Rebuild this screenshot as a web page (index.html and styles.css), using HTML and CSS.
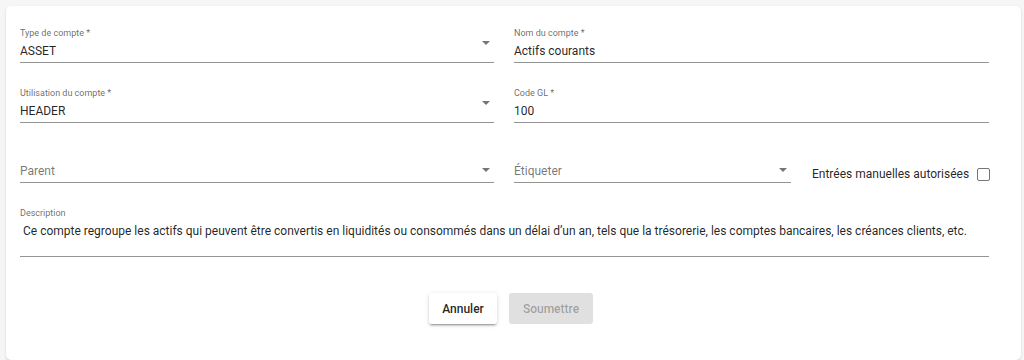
FILE: index.html
```html
<!DOCTYPE html>
<html lang="fr">
<head>
<meta charset="utf-8">
<title>Compte</title>
<link rel="stylesheet" href="styles.css">
</head>
<body>
<div class="card">
  <form class="form">
    <div class="grid">
      <div class="field">
        <div class="label">Type de compte *</div>
        <div class="input select">
          <span class="value">ASSET</span>
          <span class="arrow arrow-top"></span>
        </div>
      </div>
      <div class="field">
        <div class="label">Nom du compte *</div>
        <div class="input">
          <span class="value">Actifs courants</span>
        </div>
      </div>
      <div class="field">
        <div class="label">Utilisation du compte *</div>
        <div class="input select">
          <span class="value">HEADER</span>
          <span class="arrow arrow-top"></span>
        </div>
      </div>
      <div class="field">
        <div class="label">Code GL *</div>
        <div class="input">
          <span class="value">100</span>
        </div>
      </div>
      <div class="field">
        <div class="label"></div>
        <div class="input select">
          <span class="placeholder">Parent</span>
          <span class="arrow arrow-mid"></span>
        </div>
      </div>
      <div class="field-row">
        <div class="field grow">
          <div class="label"></div>
          <div class="input select">
            <span class="placeholder">Étiqueter</span>
            <span class="arrow arrow-mid"></span>
          </div>
        </div>
        <label class="check">
          <span class="check-text">Entrées manuelles autorisées</span>
          <span class="box"></span>
        </label>
      </div>
      <div class="field full">
        <div class="label">Description</div>
        <div class="input multiline">
          <span class="value desc">Ce compte regroupe les actifs qui peuvent être convertis en liquidités ou consommés dans un délai d’un an, tels que la trésorerie, les comptes bancaires, les créances clients, etc.</span>
        </div>
      </div>
    </div>
  </form>
  <div class="actions">
    <button type="button" class="btn btn-cancel">Annuler</button>
    <button type="button" class="btn btn-submit" disabled>Soumettre</button>
  </div>
</div>
</body>
</html>
```

FILE: styles.css
```css
* { box-sizing: border-box; }

html, body {
  margin: 0;
  background: #f6f6f6;
}

body {
  padding: 6px 3px 0 6px;
  font-family: Roboto, "Liberation Sans", sans-serif;
  color: rgba(0, 0, 0, 0.87);
  height: 360px;
  overflow: hidden;
}

.card {
  background: #ffffff;
  border-radius: 5px;
  box-shadow: 0 1px 3px rgba(0, 0, 0, 0.12), 0 1px 1px rgba(0, 0, 0, 0.06);
  height: 354px;
}

.form {
  padding: 22px 32px 0 14px;
}

.grid {
  display: grid;
  grid-template-columns: 474px 475px;
  column-gap: 20px;
  row-gap: 25px;
}

.field {
  display: flex;
  flex-direction: column;
}

.field.full {
  grid-column: 1 / 3;
}

.label {
  font-size: 9px;
  line-height: 11px;
  height: 11px;
  color: rgba(0, 0, 0, 0.6);
}

.input {
  position: relative;
  margin-top: 4px;
  padding: 1px 0 4px 0;
  border-bottom: 1px solid rgba(0, 0, 0, 0.42);
  font-size: 12px;
  line-height: 14px;
  height: 20px;
}

.input.multiline {
  height: auto;
  padding: 1px 0 18px 3px;
}

.value {
  display: block;
  color: rgba(0, 0, 0, 0.87);
  white-space: nowrap;
}

.placeholder {
  display: block;
  color: rgba(0, 0, 0, 0.55);
}

.arrow {
  position: absolute;
  right: 4px;
  width: 0;
  height: 0;
  border-left: 4px solid transparent;
  border-right: 4px solid transparent;
  border-top: 4px solid rgba(0, 0, 0, 0.54);
}

.arrow-top { top: -2px; }
.arrow-mid { top: 5px; }

.field-row {
  display: flex;
  align-items: flex-start;
}

.field.grow {
  width: 277px;
  flex: none;
}

.check {
  display: flex;
  align-items: center;
  margin-left: 21px;
  margin-top: 19px;
  gap: 8px;
  font-size: 12px;
  line-height: 14px;
  white-space: nowrap;
  color: rgba(0, 0, 0, 0.87);
}

.box {
  flex: none;
  width: 13px;
  height: 13px;
  border: 1.5px solid rgba(0, 0, 0, 0.54);
  border-radius: 2px;
}

.actions {
  display: flex;
  justify-content: center;
  gap: 12px;
  padding: 36px 5px 0 0;
}

.btn {
  font-family: Roboto, "Liberation Sans", sans-serif;
  font-size: 12px;
  font-weight: 500;
  height: 31px;
  border: none;
  border-radius: 3px;
  padding: 0 10px;
}

.btn-cancel {
  width: 68px;
  background: #ffffff;
  color: rgba(0, 0, 0, 0.87);
  box-shadow: 0 3px 1px -2px rgba(0, 0, 0, 0.2), 0 2px 2px 0 rgba(0, 0, 0, 0.14), 0 1px 5px 0 rgba(0, 0, 0, 0.12);
}

.btn-submit {
  width: 84px;
  background: #e0e0e0;
  color: rgba(0, 0, 0, 0.3);
}
```
